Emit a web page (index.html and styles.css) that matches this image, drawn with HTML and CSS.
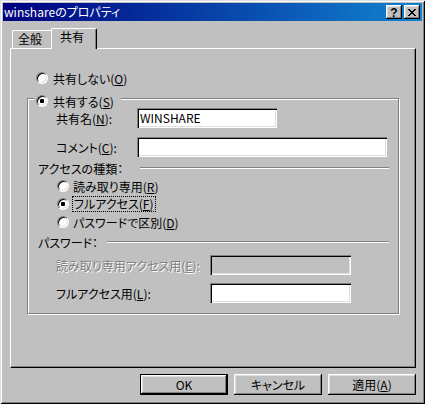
FILE: index.html
```html
<!DOCTYPE html>
<html lang="ja">
<head>
<meta charset="utf-8">
<title>winshareのプロパティ</title>
<link rel="stylesheet" href="styles.css">
</head>
<body>
<div class="window">
  <div class="titlebar">
    <span class="title">winshareのプロパティ</span>
    <div class="tb-buttons">
      <span class="tb-btn"><span class="help-glyph">?</span></span>
      <span class="tb-btn">
        <svg width="8" height="7" viewBox="0 0 8 7" shape-rendering="crispEdges"><path d="M0 0h2v1h-2zM6 0h2v1h-2zM1 1h2v1h-2zM5 1h2v1h-2zM2 2h4v1h-4zM3 3h2v1h-2zM2 4h4v1h-4zM1 5h2v1h-2zM5 5h2v1h-2zM0 6h2v1h-2zM6 6h2v1h-2z" fill="#000"/></svg>
      </span>
    </div>
  </div>
  <div class="content">
    <div class="tabs">
      <div class="tab">全般</div>
      <div class="tab active">共有</div>
    </div>
    <div class="panel">
      <div class="radio-row">
        <span class="radio"></span><span>共有しない(<u>O</u>)</span>
      </div>
      <fieldset class="group">
        <legend class="legend"><span class="legend-inner"><span class="radio checked"></span><span>共有する(<u>S</u>)</span></span></legend>
        <div class="group-body">
          <div class="field-row first">
            <span class="flabel">共有名(<u>N</u>):</span>
            <div class="input w-name">WINSHARE</div>
          </div>
          <div class="field-row gap9">
            <span class="flabel">コメント(<u>C</u>):</span>
            <div class="input w-comment"></div>
          </div>
          <div class="section">
            <span class="slabel w-access">アクセスの種類：</span>
            <span class="etch"></span>
          </div>
          <div class="opt"><span class="radio"></span><span>読み取り専用(<u>R</u>)</span></div>
          <div class="opt"><span class="radio checked"></span><span class="focus">フルアクセス(<u>F</u>)</span></div>
          <div class="opt"><span class="radio"></span><span>パスワードで区別(<u>D</u>)</span></div>
          <div class="section">
            <span class="slabel w-pass">パスワード：</span>
            <span class="etch"></span>
          </div>
          <div class="field-row gap4">
            <span class="flabel wide disabled">読み取り専用アクセス用(<u>E</u>):</span>
            <div class="input w-pw off"></div>
          </div>
          <div class="field-row gap8">
            <span class="flabel wide">フルアクセス用(<u>L</u>):</span>
            <div class="input w-pw"></div>
          </div>
        </div>
      </fieldset>
    </div>
    <div class="buttons">
      <button class="btn default">OK</button>
      <button class="btn">キャンセル</button>
      <button class="btn">適用(<u>A</u>)</button>
    </div>
  </div>
</div>
</body>
</html>
```
FILE: styles.css
```css
* { box-sizing: border-box; }
html, body { margin: 0; padding: 0; }
body {
  width: 425px;
  height: 404px;
  overflow: hidden;
  background: #c0c0c0;
  color: #000;
  font-family: "Noto Sans CJK JP", "Noto Sans", sans-serif;
  font-size: 12px;
  font-feature-settings: "palt";
}
u { text-underline-offset: 1px; }

.window {
  width: 425px;
  height: 404px;
  padding: 3px;
  background: #c0c0c0;
  box-shadow: inset 1px 1px #dfdfdf, inset -1px -1px #000, inset 2px 2px #fff, inset -2px -2px #808080;
  display: flex;
  flex-direction: column;
}

.titlebar {
  height: 18px;
  display: flex;
  align-items: center;
  justify-content: space-between;
  padding: 0 2px 0 1px;
  background: linear-gradient(to right, #000080, #1084d0);
}
.title { color: #fff; line-height: 18px; }
.tb-buttons { display: flex; gap: 2px; }
.tb-btn {
  width: 16px;
  height: 14px;
  background: #c0c0c0;
  box-shadow: inset -1px -1px #000, inset 1px 1px #fff, inset -2px -2px #808080, inset 2px 2px #dfdfdf;
  display: flex;
  align-items: center;
  justify-content: center;
}
.help-glyph {
  font-family: "Liberation Sans", sans-serif;
  font-weight: bold;
  font-size: 12px;
  line-height: 12px;
  margin-top: 1px;
}

.content {
  flex: 1;
  display: flex;
  flex-direction: column;
  padding: 0 6px 0 7px;
}

.tabs {
  display: flex;
  align-items: flex-start;
  height: 20px;
  margin-top: 7px;
}
.tab {
  height: 18px;
  margin-top: 2px;
  margin-left: 2px;
  width: 41px;
  padding-left: 5px;
  line-height: 15px;
  border-left: 1px solid #fff;
  border-top: 1px solid #fff;
  border-right: 1px solid #000;
  border-radius: 2px 2px 0 0;
  box-shadow: inset -1px 0 #808080;
  background: #c0c0c0;
}
.tab.active {
  height: 21px;
  margin-top: 0;
  margin-left: -2px;
  width: 46px;
  padding-left: 8px;
  line-height: 16px;
  position: relative;
  z-index: 1;
}

.panel {
  height: 320px;
  border-top: 1px solid #fff;
  border-left: 1px solid #fff;
  border-right: 1px solid #000;
  border-bottom: 1px solid #000;
  box-shadow: inset -1px -1px #808080;
  padding: 0 16px;
}

.radio {
  width: 12px;
  height: 12px;
  flex: none;
  border-radius: 50%;
  border: 1px solid;
  border-color: #808080 #fff #fff #808080;
  background: #fff;
  box-shadow: inset 1px 1px #000, inset -1px -1px #dfdfdf;
  display: inline-flex;
  align-items: center;
  justify-content: center;
}
.radio.checked::after {
  content: "";
  width: 4px;
  height: 4px;
  border-radius: 1px;
  background: #000;
}

.radio-row {
  display: flex;
  align-items: center;
  gap: 5px;
  height: 18px;
  margin: 20px 0 0 9px;
}

.group {
  margin: 2px 0 0 0;
  padding: 0;
  min-width: 0;
  border: 1px solid #808080;
  box-shadow: inset 1px 1px #fff, 1px 1px #fff;
}
.legend {
  margin-left: 6px;
  padding: 0 7px 0 2px;
  height: 18px;
  background: #c0c0c0;
}
.legend-inner {
  display: inline-flex;
  align-items: center;
  gap: 5px;
  height: 18px;
}

.group-body { padding: 1px 9px 10px 10px; }

.field-row {
  display: flex;
  align-items: center;
  height: 20px;
  padding-left: 18px;
}
.field-row.first { margin-top: 0; }
.field-row.gap9 { margin-top: 9px; }
.field-row.gap4 { margin-top: 4px; }
.field-row.gap8 { margin-top: 8px; }
.flabel { width: 81px; flex: none; white-space: nowrap; }
.flabel.wide { width: 154px; }
.disabled { color: #808080; text-shadow: 1px 1px 0 #fff; }

.input {
  height: 20px;
  background: #fff;
  padding-left: 3px;
  line-height: 20px;
  box-shadow: inset 1px 1px #808080, inset 2px 2px #000, inset -1px -1px #fff, inset -2px -2px #dfdfdf;
}
.input.off { background: #c0c0c0; }
.w-name { width: 140px; }
.w-comment { width: 250px; }
.w-pw { width: 141px; }

.section {
  display: flex;
  align-items: center;
  height: 18px;
  margin-top: 2px;
}
.slabel { flex: none; white-space: nowrap; }
.w-access { width: 102px; }
.w-pass { width: 69px; }
.etch {
  flex: 1;
  height: 2px;
  border-top: 1px solid #808080;
  border-bottom: 1px solid #fff;
}

.opt {
  display: flex;
  align-items: center;
  gap: 4px;
  height: 18px;
  padding-left: 19px;
}
.focus {
  padding: 0 1px;
  line-height: 14px;
  outline: 1px dotted #000;
}

.buttons {
  display: flex;
  justify-content: flex-end;
  gap: 6px;
  margin-top: 6px;
}
.btn {
  width: 88px;
  height: 21px;
  padding: 0;
  border: none;
  background: #c0c0c0;
  font: inherit;
  color: #000;
  line-height: 19px;
  box-shadow: inset -1px -1px #000, inset 1px 1px #fff, inset -2px -2px #808080, inset 2px 2px #dfdfdf;
}
.btn.default {
  border: 1px solid #000;
}
```
